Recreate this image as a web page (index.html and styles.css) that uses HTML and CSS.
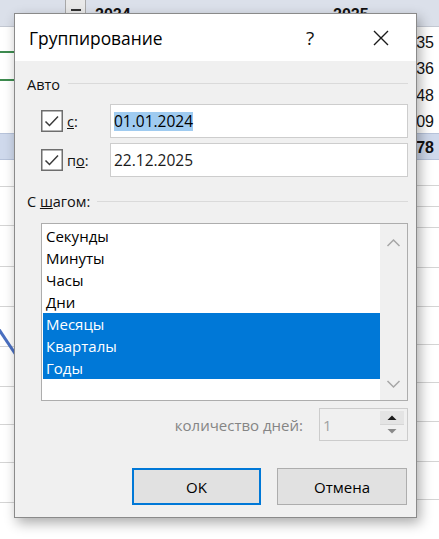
FILE: index.html
```html
<!DOCTYPE html>
<html lang="ru">
<head>
<meta charset="utf-8">
<title>Группирование</title>
<link rel="stylesheet" href="styles.css">
</head>
<body>
<div class="sheet">
  <div class="hdr">
    <span class="dd"><span class="dd-arrow"></span></span>
    <span class="yr y1">2024</span>
    <span class="yr y2">2025</span>
  </div>
  <div class="cols">
    <div class="col col-left">
      <div class="row h26 green"></div>
      <div class="row h28 green"></div>
      <div class="row h52 plain"></div>
      <div class="row h27 hl"></div>
      <div class="row h27"></div>
      <div class="row h39"></div>
      <div class="row h41"></div>
      <div class="row h40"></div>
      <div class="row h40"></div>
      <div class="row h40"></div>
      <div class="row h38"></div>
      <div class="row h38"></div>
      <div class="row h40"></div>
      <svg class="chart-line" width="24" height="40" viewBox="0 0 24 40"><line x1="-2" y1="4" x2="18" y2="34" stroke="#4a6fc0" stroke-width="3"/></svg>
    </div>
    <div class="col col-right">
      <div class="row h27 plain num">35</div>
      <div class="row h26 plain num">36</div>
      <div class="row h27 plain num">48</div>
      <div class="row h26 plain num">09</div>
      <div class="row h27 hl num bold">78</div>
      <div class="row h26"></div>
      <div class="row h21"></div>
      <div class="row h21"></div>
      <div class="row h40"></div>
      <div class="row h39"></div>
      <div class="row h38"></div>
      <div class="row h38"></div>
      <div class="row h39"></div>
      <div class="row h40"></div>
      <div class="row h38"></div>
    </div>
  </div>
</div>

<div class="dialog">
  <div class="titlebar">
    <span class="title">Группирование</span>
    <span class="help">?</span>
    <svg class="close" width="16" height="16" viewBox="0 0 16 16"><path d="M1 1 L15 15 M15 1 L1 15" stroke="#1a1a1a" stroke-width="1.4" fill="none"/></svg>
  </div>
  <div class="content">
    <div class="ghead"><span>Авто</span><span class="rule"></span></div>
    <div class="frow first">
      <div class="chk-area">
        <span class="chk"><svg width="22" height="22" viewBox="0 0 22 22"><rect x="0.75" y="0.75" width="20.5" height="20.5" fill="#fff" stroke="#6e6e6e" stroke-width="1.5"/><path d="M4.5 11.5 L8.5 15.5 L17 6.5" stroke="#3a3a3a" stroke-width="1.5" fill="none"/></svg></span>
        <span class="lbl"><u>с</u>:</span>
      </div>
      <div class="input"><span class="sel">01.01.2024</span></div>
    </div>
    <div class="frow second">
      <div class="chk-area">
        <span class="chk"><svg width="22" height="22" viewBox="0 0 22 22"><rect x="0.75" y="0.75" width="20.5" height="20.5" fill="#fff" stroke="#6e6e6e" stroke-width="1.5"/><path d="M4.5 11.5 L8.5 15.5 L17 6.5" stroke="#3a3a3a" stroke-width="1.5" fill="none"/></svg></span>
        <span class="lbl">п<u>о</u>:</span>
      </div>
      <div class="input"><span class="val">22.12.2025</span></div>
    </div>
    <div class="ghead second-head"><span>С <u>ш</u>агом:</span><span class="rule"></span></div>
    <div class="list">
      <div class="items">
        <div class="item">Секунды</div>
        <div class="item">Минуты</div>
        <div class="item">Часы</div>
        <div class="item">Дни</div>
        <div class="item on">Месяцы</div>
        <div class="item on">Кварталы</div>
        <div class="item on">Годы</div>
      </div>
      <div class="sb">
        <svg width="27" height="16" viewBox="0 0 27 16"><path d="M7.5 11 L13.5 5 L19.5 11" stroke="#a6a6a6" stroke-width="1.5" fill="none"/></svg>
        <svg width="27" height="16" viewBox="0 0 27 16"><path d="M7.5 5 L13.5 11 L19.5 5" stroke="#a6a6a6" stroke-width="1.5" fill="none"/></svg>
      </div>
    </div>
    <div class="spinrow">
      <span class="spin-lbl">количество дней:</span>
      <div class="spin">
        <span class="spin-val">1</span>
        <div class="spin-btns">
          <span class="sbtn up"><svg width="24" height="13" viewBox="0 0 24 13"><path d="M7.5 9 L12 4.5 L16.5 9 Z" fill="#1a1a1a"/></svg></span>
          <span class="sbtn down"><svg width="24" height="13" viewBox="0 0 24 13"><path d="M7.5 4 L12 8.5 L16.5 4 Z" fill="#8a8a8a"/></svg></span>
        </div>
      </div>
    </div>
    <div class="btnrow">
      <span class="btn ok">OK</span>
      <span class="btn cancel">Отмена</span>
    </div>
  </div>
</div>
</body>
</html>
```
FILE: styles.css
```css
html, body {
  margin: 0;
  padding: 0;
}
body {
  width: 439px;
  height: 539px;
  overflow: hidden;
  position: relative;
  background: #fff;
  font-family: "Open Sans", "Noto Sans", sans-serif;
}

/* ---------- spreadsheet behind ---------- */
.sheet {
  width: 439px;
  height: 539px;
  display: flex;
  flex-direction: column;
  font-family: "Liberation Sans", Arial, sans-serif;
}
.hdr {
  height: 27px;
  flex: none;
  box-sizing: border-box;
  background: #dbe0ea;
  border-bottom: 1px solid #c3c8d2;
  position: relative;
}
.dd {
  position: absolute;
  left: 65px;
  top: -4px;
  width: 21px;
  height: 21px;
  box-sizing: border-box;
  background: #e9e9e9;
  border: 1px solid #a8a8a8;
}
.dd-arrow {
  position: absolute;
  left: 5px;
  top: 12px;
  width: 10px;
  height: 2px;
  background: #333;
}
.yr {
  position: absolute;
  top: 6px;
  font-size: 16px;
  font-weight: bold;
  color: #111;
}
.y1 { left: 95px; }
.y2 { left: 333px; }

.cols {
  flex: 1;
  display: flex;
}
.col {
  display: flex;
  flex-direction: column;
  position: relative;
}
.col-left { width: 200px; }
.col-right { flex: 1; }

.row {
  flex: none;
  box-sizing: border-box;
  border-bottom: 1px solid #d4d4d4;
}
.row.plain { border-bottom: none; }
.row.green { border-bottom: 2px solid #3d8b4f; }
.row.hl {
  background: #cfd9ec;
  border-top: 1px solid #b7c3da;
  border-bottom: 1px solid #b7c3da;
}
.h21 { height: 21px; }
.h26 { height: 26px; }
.h27 { height: 27px; }
.h28 { height: 28px; }
.h38 { height: 38px; }
.h39 { height: 39px; }
.h40 { height: 40px; }
.h41 { height: 41px; }
.h52 { height: 52px; }

.num {
  display: flex;
  align-items: flex-end;
  justify-content: flex-end;
  padding-right: 5px;
  padding-bottom: 2px;
  font-size: 16px;
  color: #111;
}
.num.bold { font-weight: bold; }

.chart-line {
  position: absolute;
  left: 0;
  top: 297px;
}

/* ---------- dialog ---------- */
.dialog {
  position: absolute;
  left: 14px;
  top: 13px;
  width: 403px;
  height: 505px;
  box-sizing: border-box;
  border: 1px solid #8a8a8a;
  background: #f0f0f0;
  box-shadow: 3px 5px 12px rgba(0, 0, 0, 0.33);
  display: flex;
  flex-direction: column;
  color: #000;
}
.titlebar {
  height: 47px;
  flex: none;
  background: #fff;
  display: flex;
  align-items: center;
  padding-left: 14px;
  padding-right: 27px;
}
.title {
  flex: 1;
  font-size: 17.4px;
  color: #000;
}
.help {
  width: 20px;
  text-align: center;
  font-size: 19px;
  margin-right: 53px;
  color: #111;
}
.close {
  display: block;
}

.content {
  flex: 1;
  padding: 14px 8px 0 12px;
  font-size: 15px;
}
.ghead {
  height: 19px;
  display: flex;
  align-items: center;
  font-size: 14.5px;
  color: #111;
}
.ghead .rule {
  flex: 1;
  height: 1px;
  background: #dadada;
  margin-left: 8px;
  margin-bottom: 3px;
}
.second-head { margin-top: 15px; }
.second-head .rule { margin-left: 7px; margin-bottom: 0; }

.frow {
  height: 34px;
  display: flex;
  align-items: center;
  padding-left: 14px;
}
.frow.first { margin-top: 10px; }
.frow.second { margin-top: 5px; }
.chk-area {
  width: 69px;
  flex: none;
  display: flex;
  align-items: center;
}
.chk {
  width: 22px;
  height: 22px;
  display: block;
}
.chk svg { display: block; }
.lbl {
  margin-left: 4px;
  font-size: 14.5px;
  color: #111;
}
.input {
  flex: 1;
  height: 34px;
  box-sizing: border-box;
  background: #fff;
  border: 1px solid #cdcdcd;
  display: flex;
  align-items: center;
  padding-left: 3px;
  font-size: 15.5px;
}
.sel {
  background: #9fcbf0;
  color: #000;
  line-height: 19px;
}
.val { color: #1a1a1a; }

.list {
  margin-top: 12px;
  margin-left: 14px;
  height: 178px;
  box-sizing: border-box;
  border: 1px solid #adadad;
  background: #fff;
  display: flex;
}
.items {
  flex: 1;
  padding: 1px 0 0 1px;
}
.item {
  height: 22px;
  line-height: 22px;
  padding-left: 3px;
  color: #000;
}
.item.on {
  background: #0078d7;
  color: #fff;
}
.sb {
  width: 27px;
  background: #f0f0f0;
  display: flex;
  flex-direction: column;
  justify-content: space-between;
  padding: 11px 0 8px;
}
.sb svg { display: block; }

.spinrow {
  margin-top: 7px;
  height: 33px;
  display: flex;
  justify-content: flex-end;
  align-items: center;
}
.spin-lbl {
  color: #858585;
  margin-right: 16px;
}
.spin {
  width: 89px;
  height: 33px;
  box-sizing: border-box;
  border: 1px solid #cccccc;
  background: #f0f0f0;
  display: flex;
  align-items: center;
  padding-left: 3px;
}
.spin-val {
  flex: 1;
  color: #a0a0a0;
}
.spin-btns {
  width: 24px;
  margin-right: 3px;
  display: flex;
  flex-direction: column;
}
.sbtn { display: block; height: 13px; }
.sbtn svg { display: block; }
.sbtn.up {
  background: #e4e4e4;
  border-bottom: 1px solid #d6d6d6;
}

.btnrow {
  margin-top: 27px;
  display: flex;
  justify-content: flex-end;
  gap: 16px;
  margin-right: 1px;
}
.btn {
  height: 37px;
  box-sizing: border-box;
  background: #e1e1e1;
  border: 1px solid #adadad;
  display: flex;
  align-items: center;
  justify-content: center;
  font-size: 15px;
  color: #000;
}
.btn.ok {
  width: 129px;
  border: 2px solid #0078d7;
}
.btn.cancel { width: 130px; }
```
